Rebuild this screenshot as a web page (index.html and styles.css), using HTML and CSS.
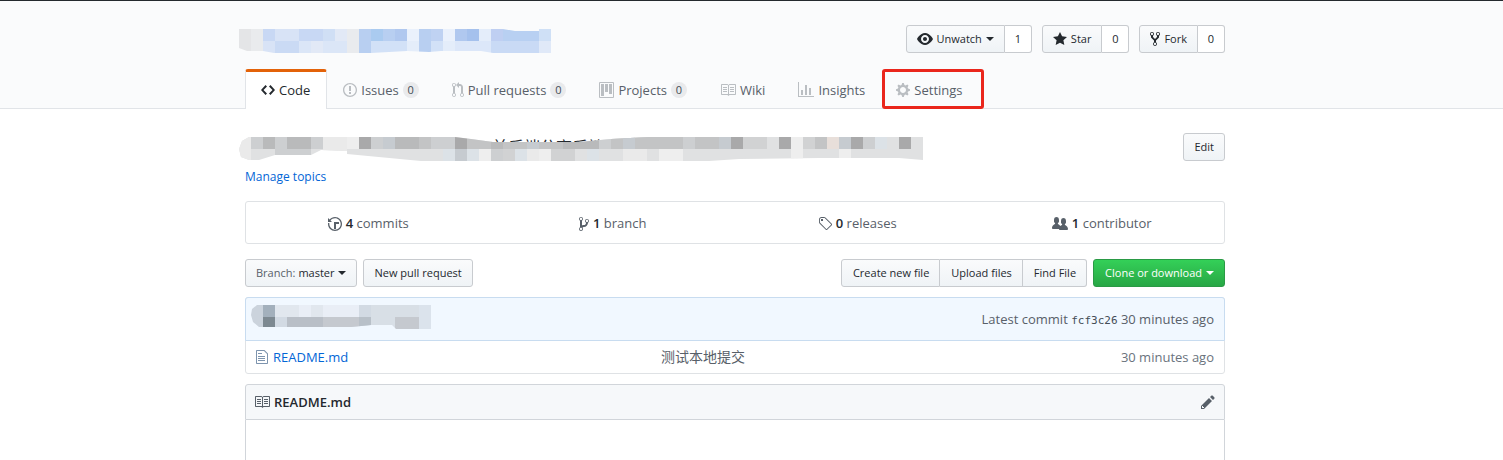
FILE: index.html
```
<!DOCTYPE html>
<html lang="en">
<head>
<meta charset="utf-8">
<title>Repository</title>
<link rel="stylesheet" href="styles.css">
</head>
<body>
<header class="repohead">
  <div class="container">
    <div class="head-row">
      <svg class="mosaic mosaic-title" width="312" height="24" viewBox="0 0 312 24" role="img" aria-label="Repository name hidden">
        <clipPath id="c1"><path d="M0 0H264L276 2H300V0H312V24H254L242 22H202L190 23L168 22L132 24H35L24 22H8L0 19Z"/></clipPath>
        <g clip-path="url(#c1)">
          <path fill="#e4e5e7" d="M0 0h12v24H0z"/><path fill="#e9ebed" d="M12 0h12v24H12z"/>
          <path fill="#c8d8f4" d="M24 0h12v12H24zM60 0h24v12H60z"/><path fill="#d8e3f6" d="M36 0h24v12H36zM24 12h12v12H24z"/>
          <path fill="#d0dff5" d="M84 0h12v12H84z"/><path fill="#e2e9f6" d="M96 0h12v12H96zM72 12h12v12H72z"/><path fill="#e9ebee" d="M108 0h12v24H108z"/>
          <path fill="#cadaf4" d="M36 12h24v12H36z"/><path fill="#dbe6f7" d="M60 12h12v12H60zM84 12h24v12H84z"/>
          <path fill="#b8cff1" d="M120 0h12v24H120zM144 0h12v12H144zM180 0h12v24H180z"/><path fill="#aacbf0" d="M132 0h12v12H132z"/><path fill="#b0c8ef" d="M156 0h12v12H156zM216 0h12v12H216z"/>
          <path fill="#eaf1fc" d="M168 0h12v12H168zM204 0h12v12H204z"/><path fill="#bfd2f2" d="M192 0h12v12H192z"/><path fill="#a5c1ed" d="M228 0h12v12H228z"/>
          <path fill="#e4edfa" d="M240 0h12v12H240zM168 12h12v12H168zM204 12h12v12H204z"/><path fill="#d2e1f7" d="M132 12h36v12H132zM192 12h12v12H192z"/><path fill="#dce7f9" d="M216 12h36v12H216z"/>
          <path fill="#bfcff2" d="M252 0h12v12H252z"/><path fill="#b8d0f2" d="M264 0h36v12H264z"/><path fill="#c9daf5" d="M252 12h48v12H252z"/><path fill="#cfe0f6" d="M300 0h12v12H300z"/><path fill="#e0e9f8" d="M300 12h12v12H300z"/>
        </g>
      </svg>
      <ul class="actions">
        <li class="split"><button class="btn" type="button"><svg width="16" height="16" viewBox="0 0 16 16"><path d="M8.06 2C3 2 0 8 0 8s3 6 8.06 6C13 14 16 8 16 8s-3-6-7.94-6zM8 12c-2.2 0-4-1.78-4-4 0-2.2 1.8-4 4-4 2.22 0 4 1.8 4 4 0 2.22-1.78 4-4 4zm2-4c0 1.11-.89 2-2 2-1.11 0-2-.89-2-2 0-1.11.89-2 2-2 1.11 0 2 .89 2 2z"/></svg>Unwatch<span class="caret"></span></button><a class="social-count" href="#">1</a></li>
        <li class="split"><button class="btn" type="button"><svg width="14" height="16" viewBox="0 0 14 16"><path d="M14 6l-4.9-.64L7 1 4.9 5.36 0 6l3.6 3.26L2.67 14 7 11.67 11.33 14l-.93-4.74z"/></svg>Star</button><a class="social-count" href="#">0</a></li>
        <li class="split"><button class="btn" type="button"><svg width="10" height="16" viewBox="0 0 10 16"><path d="M8 1a1.993 1.993 0 0 0-1 3.72V6L5 8 3 6V4.72A1.993 1.993 0 0 0 2 1a1.993 1.993 0 0 0-1 3.72V6.5l3 3v1.78A1.993 1.993 0 0 0 5 15a1.993 1.993 0 0 0 1-3.72V9.5l3-3V4.72A1.993 1.993 0 0 0 8 1zM2 4.2C1.34 4.2.8 3.65.8 3c0-.65.55-1.2 1.2-1.2.65 0 1.2.55 1.2 1.2 0 .65-.55 1.2-1.2 1.2zm3 10c-.66 0-1.2-.55-1.2-1.2 0-.65.55-1.2 1.2-1.2.65 0 1.2.55 1.2 1.2 0 .65-.55 1.2-1.2 1.2zm3-10c-.66 0-1.2-.55-1.2-1.2 0-.65.55-1.2 1.2-1.2.65 0 1.2.55 1.2 1.2 0 .65-.55 1.2-1.2 1.2z"/></svg>Fork</button><a class="social-count" href="#">0</a></li>
      </ul>
    </div>
    <nav class="tabs">
      <a class="tab selected" href="#"><svg width="14" height="16" viewBox="0 0 14 16"><path d="M9.5 3L8 4.5 11.5 8 8 11.5 9.5 13 14 8 9.5 3zm-5 0L0 8l4.5 5L6 11.5 2.5 8 6 4.5 4.5 3z"/></svg>Code</a>
      <a class="tab" href="#"><svg width="14" height="16" viewBox="0 0 14 16"><path d="M7 2.3c3.14 0 5.7 2.56 5.7 5.7s-2.56 5.7-5.7 5.7A5.71 5.71 0 0 1 1.3 8c0-3.14 2.56-5.7 5.7-5.7zM7 1C3.14 1 0 4.14 0 8s3.14 7 7 7 7-3.14 7-7-3.14-7-7-7zm1 3H6v5h2V4zm0 6H6v2h2v-2z"/></svg>Issues<span class="counter">0</span></a>
      <a class="tab" href="#"><svg width="12" height="16" viewBox="0 0 12 16"><path d="M11 11.28V5c-.03-.78-.34-1.47-.94-2.06C9.46 2.35 8.78 2.03 8 2H7V0L4 3l3 3V4h1c.27.02.48.11.69.31.21.2.3.42.31.69v6.28A1.993 1.993 0 0 0 10 15a1.993 1.993 0 0 0 1-3.72zm-1 2.92c-.66 0-1.2-.55-1.2-1.2 0-.65.55-1.2 1.2-1.2.65 0 1.2.55 1.2 1.2 0 .65-.55 1.2-1.2 1.2zM4 3c0-1.11-.89-2-2-2a1.993 1.993 0 0 0-1 3.72v6.56A1.993 1.993 0 0 0 2 15a1.993 1.993 0 0 0 1-3.72V4.72c.59-.34 1-.98 1-1.72zm-.8 10c0 .66-.55 1.2-1.2 1.2-.65 0-1.2-.55-1.2-1.2 0-.65.55-1.2 1.2-1.2.65 0 1.2.55 1.2 1.2zM2 4.2C1.34 4.2.8 3.65.8 3c0-.65.55-1.2 1.2-1.2.65 0 1.2.55 1.2 1.2 0 .65-.55 1.2-1.2 1.2z"/></svg>Pull requests<span class="counter">0</span></a>
      <a class="tab" href="#"><svg width="15" height="16" viewBox="0 0 15 16"><path fill-rule="evenodd" d="M10 12h3V2h-3v10zm-4-2h3V2H6v8zm-4 4h3V2H2v12zm-1 1h13V1H1v14zM14 0H1a1 1 0 0 0-1 1v14a1 1 0 0 0 1 1h13a1 1 0 0 0 1-1V1a1 1 0 0 0-1-1z"/></svg>Projects<span class="counter">0</span></a>
      <a class="tab" href="#"><svg width="16" height="16" viewBox="0 0 16 16"><path d="M3 5h4v1H3V5zm0 3h4V7H3v1zm0 2h4V9H3v1zm11-5h-4v1h4V5zm0 2h-4v1h4V7zm0 2h-4v1h4V9zm2-6v9c0 .55-.45 1-1 1H9.5l-1 1-1-1H2c-.55 0-1-.45-1-1V3c0-.55.45-1 1-1h5.5l1 1 1-1H15c.55 0 1 .45 1 1zm-8 .5L7.5 3H2v9h6V3.5zm7-.5H9.5l-.5.5V12h6V3z"/></svg>Wiki</a>
      <a class="tab" href="#"><svg width="16" height="16" viewBox="0 0 16 16"><path d="M16 14v1H0V0h1v14h15zM5 13H3V8h2v5zm4 0H7V3h2v10zm4 0h-2V6h2v7z"/></svg>Insights</a>
      <a class="tab marked" href="#"><svg width="14" height="16" viewBox="0 0 14 16"><path d="M14 8.77v-1.6l-1.94-.64-.45-1.09.88-1.84-1.13-1.13-1.81.91-1.09-.45-.69-1.92h-1.6l-.63 1.94-1.11.45-1.84-.88-1.13 1.13.91 1.81-.45 1.09L0 7.23v1.59l1.94.64.45 1.09-.88 1.84 1.13 1.13 1.81-.91 1.09.45.69 1.92h1.59l.63-1.94 1.11-.45 1.84.88 1.13-1.13-.92-1.81.47-1.09L14 8.75v.02zM7 11c-1.66 0-3-1.34-3-3s1.34-3 3-3 3 1.34 3 3-1.34 3-3 3z"/></svg>Settings</a>
    </nav>
  </div>
</header>
<main>
  <div class="container">
    <div class="about">
      <svg class="mosaic mosaic-about" width="684" height="24" viewBox="0 0 684 24" role="img" aria-label="Repository description hidden">
        <clipPath id="c2"><path d="M10 0H216L232 2L254 5H340L372 2L410 0H684V23L660 21H580L500 22L470 24H182L108 17V14L82 13L72 18H36L20 23H10L2 20L0 12L3 4Z"/></clipPath>
        <text class="desc" x="253" y="16">前后端分离后端</text>
        <g clip-path="url(#c2)">
          <path fill="#e0e1e2" d="M0 0h684v24H0z"/>
          <path fill="#eaeaea" d="M0 0h12v24H0zM84 0h24v24H84zM288 12h12v12H288zM384 12h24v12H384z"/>
          <path fill="#cdcfd1" d="M12 0h12v12H12zM72 0h12v12H72zM36 0h12v12H36zM132 0h24v12H132zM192 0h24v12H192zM36 12h36v12H36zM252 12h12v12H252zM360 0h120v12H360zM624 0h12v12H624z"/>
          <path fill="#b9babb" d="M24 0h12v12H24zM48 0h24v12H48zM156 0h24v12H156zM252 0h12v12H252zM324 0h36v12H324z"/>
          <path fill="#c3c4c5" d="M180 0h12v12H180zM228 0h24v12H228zM264 0h60v12H264zM372 0h72v12H372zM456 0h24v12H456zM576 0h12v12H576z"/>
          <path fill="#a9a9aa" d="M120 0h12v12H120zM216 0h12v12H216zM492 0h12v12H492zM540 0h12v12H540zM612 0h12v12H612zM660 0h12v12H660z"/>
          <path fill="#dce2e7" d="M204 12h12v12H204zM228 12h12v12H228zM276 12h12v12H276zM348 12h12v12H348zM636 0h12v12H636z"/>
          <path fill="#c6cbd0" d="M144 0h12v12H144zM216 12h12v12H216zM288 0h12v12H288zM384 0h12v12H384zM480 0h12v12H480zM600 0h12v12H600z"/>
          <path fill="#eeeeee" d="M108 0h12v12H108zM240 12h12v12H240zM300 12h12v12H300zM420 12h24v12H420zM552 0h12v24H552zM600 12h12v12H600z"/>
          <path fill="#d1d2d3" d="M504 0h24v12H504zM564 0h12v12H564zM264 12h12v12H264zM312 12h24v12H312z"/>
          <path fill="#e8dfda" d="M588 0h12v12H588z"/>
        </g>
      </svg>
      <button class="btn" type="button">Edit</button>
    </div>
    <a class="topics" href="#">Manage topics</a>
    <ul class="summary">
      <li><a href="#"><svg width="14" height="16" viewBox="0 0 14 16"><path d="M8 13H6V6h5v2H8v5zM7 1C4.81 1 2.87 2.02 1.59 3.59L0 2v4h4L2.5 4.5C3.55 3.17 5.17 2.3 7 2.3c3.14 0 5.7 2.56 5.7 5.7s-2.56 5.7-5.7 5.7A5.71 5.71 0 0 1 1.3 8c0-.34.03-.67.09-1H.08C.03 7.33 0 7.66 0 8c0 3.86 3.14 7 7 7s7-3.14 7-7-3.14-7-7-7z"/></svg><span><b>4</b> commits</span></a></li>
      <li><a href="#"><svg width="10" height="16" viewBox="0 0 10 16"><path d="M10 5c0-1.11-.89-2-2-2a1.993 1.993 0 0 0-1 3.72v.3c-.02.52-.23.98-.63 1.38-.4.4-.86.61-1.38.63-.83.02-1.48.16-2 .45V4.72a1.993 1.993 0 0 0-1-3.72C.88 1 0 1.89 0 3a2 2 0 0 0 1 1.72v6.56c-.59.35-1 .99-1 1.72 0 1.11.89 2 2 2 1.11 0 2-.89 2-2 0-.53-.2-1-.53-1.36.09-.06.48-.41.59-.47.25-.11.56-.17.94-.17 1.05-.05 1.95-.45 2.75-1.25S8.95 7.77 9 6.73h-.02C9.59 6.37 10 5.73 10 5zM2 1.8c.66 0 1.2.55 1.2 1.2 0 .65-.55 1.2-1.2 1.2C1.35 4.2.8 3.65.8 3c0-.65.55-1.2 1.2-1.2zm0 12.41c-.66 0-1.2-.55-1.2-1.2 0-.65.55-1.2 1.2-1.2.65 0 1.2.55 1.2 1.2 0 .65-.55 1.2-1.2 1.2zm6-8c-.66 0-1.2-.55-1.2-1.2 0-.65.55-1.2 1.2-1.2.65 0 1.2.55 1.2 1.2 0 .65-.55 1.2-1.2 1.2z"/></svg><span><b>1</b> branch</span></a></li>
      <li><a href="#"><svg width="14" height="16" viewBox="0 0 14 16"><path d="M7.73 1.73C7.26 1.26 6.62 1 5.96 1H3.5C2.13 1 1 2.13 1 3.5v2.47c0 .66.27 1.3.73 1.77l6.06 6.06c.39.39 1.02.39 1.41 0l4.59-4.59a.996.996 0 0 0 0-1.41L7.73 1.73zM2.38 7.09c-.31-.3-.47-.7-.47-1.13V3.5c0-.88.72-1.59 1.59-1.59h2.47c.42 0 .83.16 1.13.47l6.14 6.13-4.73 4.73-6.13-6.15zM3.01 3h2v2H3V3h.01z"/></svg><span><b>0</b> releases</span></a></li>
      <li><a href="#"><svg width="16" height="16" viewBox="0 0 16 16"><path d="M16 12.999c0 .439-.45 1-1 1H7.995c-.539 0-.994-.447-.995-.999H1c-.54 0-1-.561-1-1 0-2.634 3-4 3-4s.229-.409 0-1c-.841-.621-1.058-.59-1-3 .058-2.419 1.367-3 2.5-3s2.442.58 2.5 3c.058 2.41-.159 2.379-1 3-.229.59 0 1 0 1s1.549.711 2.42 2.088C9.196 9.369 10 8.999 10 8.999s.229-.409 0-1c-.841-.62-1.058-.59-1-3 .058-2.419 1.367-3 2.5-3s2.437.581 2.495 3c.059 2.41-.158 2.38-1 3-.229.59 0 1 0 1s3.005 1.366 3.005 4"/></svg><span><b>1</b> contributor</span></a></li>
    </ul>
    <div class="file-nav">
      <button class="btn branch" type="button"><span class="muted">Branch:</span>master<span class="caret"></span></button>
      <button class="btn" type="button">New pull request</button>
      <div class="group">
        <button class="btn" type="button">Create new file</button>
        <button class="btn" type="button">Upload files</button>
        <button class="btn" type="button">Find File</button>
      </div>
      <button class="btn primary" type="button">Clone or download<span class="caret"></span></button>
    </div>
    <section class="files">
      <div class="commit">
        <svg class="mosaic" width="180" height="24" viewBox="0 0 180 24" role="img" aria-label="Commit author hidden">
          <clipPath id="c3"><path d="M6 0H180V24H145L141 20H120L100 22H8L2 17L0 10L1 4Z"/></clipPath>
          <g clip-path="url(#c3)">
            <path fill="#cbd3dc" d="M0 0h12v24H0zM108 12h12v12h-12z"/><path fill="#a3b0bc" d="M12 0h12v12H12z"/><path fill="#7d8991" d="M12 12h12v12H12z"/>
            <path fill="#e1e7ee" d="M24 0h60v12H24z"/><path fill="#e9eef6" d="M48 0h12v12H48zM72 0h36v12H72z"/><path fill="#d2dae3" d="M24 12h12v12H24zM84 12h24v12H84zM108 0h24v12h-24z"/>
            <path fill="#b9bfc7" d="M36 12h36v12H36z"/><path fill="#c5c9cf" d="M72 12h36v12H72zM144 12h24v12h-24z"/><path fill="#b8c0c8" d="M108 12h12v12h-12z"/>
            <path fill="#d8dfe6" d="M120 0h48v12h-48zM120 12h24v12h-24z"/><path fill="#dbe3ec" d="M168 0h12v24h-12z"/>
          </g>
        </svg>
        <p>Latest commit <a class="sha" href="#">fcf3c26</a> 30 minutes ago</p>
      </div>
      <table class="list">
        <tr>
          <td class="name"><a href="#"><svg width="12" height="16" viewBox="0 0 12 16"><path d="M6 5H2V4h4v1zM2 8h7V7H2v1zm0 2h7V9H2v1zm0 2h7v-1H2v1zm10-7.5V14c0 .55-.45 1-1 1H1c-.55 0-1-.45-1-1V2c0-.55.45-1 1-1h7.5L12 4.5zM11 5L8 2H1v12h10V5z"/></svg>README.md</a></td>
          <td class="message"><a href="#" lang="zh-CN">测试本地提交</a></td>
          <td class="age">30 minutes ago</td>
        </tr>
      </table>
    </section>
    <section class="readme">
      <h3><svg width="16" height="16" viewBox="0 0 16 16"><path d="M3 5h4v1H3V5zm0 3h4V7H3v1zm0 2h4V9H3v1zm11-5h-4v1h4V5zm0 2h-4v1h4V7zm0 2h-4v1h4V9zm2-6v9c0 .55-.45 1-1 1H9.5l-1 1-1-1H2c-.55 0-1-.45-1-1V3c0-.55.45-1 1-1h5.5l1 1 1-1H15c.55 0 1 .45 1 1zm-8 .5L7.5 3H2v9h6V3.5zm7-.5H9.5l-.5.5V12h6V3z"/></svg>README.md</h3>
      <button class="icon-btn" type="button" aria-label="Edit README"><svg width="14" height="16" viewBox="0 0 14 16"><path d="M0 12v3h3l8-8-3-3-8 8zm3 2H1v-2h1v1h1v1zm10.3-9.3L12 6 9 3l1.3-1.3a.996.996 0 0 1 1.41 0l1.59 1.59c.39.39.39 1.02 0 1.41z"/></svg></button>
    </section>
    <div class="readme-body"></div>
  </div>
</main>
</body>
</html>
```
FILE: styles.css
```
* { box-sizing: border-box; }
body {
  margin: 0;
  min-height: 100vh;
  display: flex;
  flex-direction: column;
  border-top: 1px solid #24292e;
  background: #fff;
  color: #24292e;
  font: 13px/20px "Open Sans", "Noto Sans CJK SC", sans-serif;
}
a { color: inherit; text-decoration: none; }
ul { list-style: none; margin: 0; padding: 0; }
p, h3 { margin: 0; }
svg { fill: currentColor; flex: none; }

.repohead { background: #fafbfc; border-bottom: 1px solid #e1e4e8; padding: 24px 33px 0 0; }
main { flex: 1; display: flex; padding: 24px 33px 0 0; }
.container { width: 100%; max-width: 980px; margin: 0 auto; }
main .container { display: flex; flex-direction: column; }

.head-row { display: flex; justify-content: space-between; align-items: flex-start; }
.mosaic { display: block; overflow: visible; }
.mosaic-title, .mosaic-about { margin: 4px 0 0 -6px; }
.desc { font-size: 16px; fill: #24292e; }
.actions { display: flex; gap: 10px; }
.split { display: flex; }

.btn {
  display: inline-flex;
  align-items: center;
  justify-content: center;
  gap: 4px;
  height: 28px;
  padding: 0 10px;
  border: 1px solid #c8cbcf;
  border-radius: 3px;
  background: linear-gradient(#fafbfc, #eff3f6);
  color: #24292e;
  font: 500 11px/20px "Open Sans", sans-serif;
  white-space: nowrap;
}
.split .btn { border-radius: 3px 0 0 3px; }
.social-count {
  min-width: 27px;
  padding: 0 8px;
  border: 1px solid #c8cbcf;
  border-left: 0;
  border-radius: 0 3px 3px 0;
  background: #fff;
  font-size: 11px;
  font-weight: 500;
  line-height: 26px;
  text-align: center;
}
.caret { border: 4px solid transparent; border-top-color: currentColor; border-bottom: 0; }
.muted { color: #586069; font-weight: 400; }
.file-nav .primary { background: linear-gradient(#34d058, #28a745); border-color: #2a9a45; color: #fff; padding: 0 11px; }

.tabs { display: flex; margin: 16px 0 -1px; }
.tab {
  display: flex;
  align-items: center;
  gap: 4px;
  height: 40px;
  padding: 2px 16px 0 15px;
  border: solid transparent;
  border-width: 0 1px;
  color: #586069;
  white-space: nowrap;
}
.tab svg { color: #babec2; }
.counter {
  min-width: 16px;
  padding: 0 4px;
  border-radius: 8px;
  background: #e9eaec;
  color: #444d56;
  font-size: 11px;
  font-weight: 500;
  line-height: 16px;
  text-align: center;
}
.selected { padding: 0 16px 1px 15px; border: 1px solid #e1e4e8; border-top: 3px solid #e36209; border-bottom: 0; border-radius: 3px 3px 0 0; background: #fff; color: #24292e; }
.selected svg { color: inherit; }
.marked { padding: 2px 20px 0 13px; outline: 3px solid #ea261c; outline-offset: -3px; border-radius: 3px; }

.about { display: flex; justify-content: space-between; align-items: flex-start; }
.topics { align-self: flex-start; margin-top: 6px; color: #0366d6; font-size: 12px; }
.summary { display: flex; margin-top: 14px; border: 1px solid #dfe2e5; border-radius: 3px; }
.summary li { flex: 1; }
.summary a { display: flex; justify-content: center; align-items: center; gap: 4px; padding-top: 2px; line-height: 39px; color: #586069; }
.summary b { color: #24292e; font-weight: 600; }

.file-nav { display: flex; gap: 6px; margin: 15px 0 10px; }
.file-nav .btn { padding: 0 10px 0 11px; }
.file-nav .branch { gap: 3px; padding: 0 10px; }
.group { display: flex; margin-left: auto; }
.group .btn { border-radius: 0; }
.group .btn + .btn { border-left: 0; }
.group .btn:first-child { border-radius: 3px 0 0 3px; }
.group .btn:last-child { border-radius: 0 3px 3px 0; }

.files { border: 1px solid #dfe2e5; border-radius: 3px; }
.commit {
  display: flex;
  justify-content: space-between;
  margin: -1px -1px 0;
  padding: 7px 10px 11px 5px;
  border: 1px solid #c8dcf0;
  border-radius: 3px 3px 0 0;
  background: #f1f8ff;
  color: #586069;
}
.commit p { padding-top: 4px; }
.sha { color: #444d56; font: 11px/16px "DejaVu Sans Mono", monospace; }
.list { width: 100%; table-layout: fixed; border-collapse: collapse; }
.list td { height: 32px; padding: 0 10px; white-space: nowrap; }
.list .name { width: 415px; }
.name a { display: flex; gap: 5px; align-items: center; color: #0366d6; }
.name svg { color: #7d94ae; }
.list .message { padding: 0; color: #586069; font-size: 14px; }
.list .age { width: 150px; color: #6a737d; text-align: right; }

.readme {
  display: flex;
  justify-content: space-between;
  align-items: center;
  margin-top: 10px;
  padding: 7px 9px 7px 8px;
  border: 1px solid #d1d5da;
  border-radius: 3px 3px 0 0;
  background: #f6f8fa;
}
.readme h3 { display: flex; align-items: center; gap: 4px; font-size: 13px; font-weight: 600; }
.readme h3 svg { color: #586069; }
.icon-btn { display: flex; padding: 0; border: 0; background: none; color: #586069; }
.readme-body { flex: 1; border: solid #d1d5da; border-width: 0 1px; }
```
